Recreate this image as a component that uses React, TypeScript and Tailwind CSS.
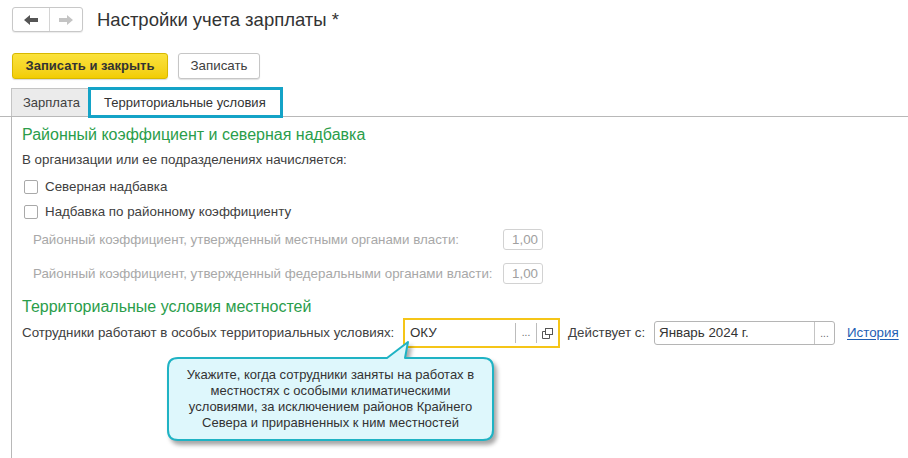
import React from 'react';

const ArrowLeft = ({ color }: { color: string }) => (
    <svg width="14" height="10" viewBox="0 0 14 10">
        <path d="M0 5 L6 0 L6 3 L14 3 L14 7 L6 7 L6 10 Z" fill={color} />
    </svg>
);

const ArrowRight = ({ color }: { color: string }) => (
    <svg width="14" height="10" viewBox="0 0 14 10">
        <path d="M14 5 L8 0 L8 3 L0 3 L0 7 L8 7 L8 10 Z" fill={color} />
    </svg>
);

const OpenIcon = () => (
    <svg width="11" height="11" viewBox="0 0 11 11" fill="none" stroke="#555" strokeWidth="1">
        <rect x="3.5" y="0.5" width="7" height="6" fill="white" />
        <path d="M3.5 3.5 H0.5 V10.5 H7.5 V6.5" />
    </svg>
);

function Checkbox({ label }: { label: string }) {
    return (
        <div className="flex items-center h-[21px] pl-[12px]">
            <div className="w-[14px] h-[14px] border border-[#a9a9a9] rounded-[2px] bg-white" />
            <span className="ml-[7px] text-[13.33px] text-[#404040]">{label}</span>
        </div>
    );
}

function DisabledRow({ label, value, mt }: { label: string; value: string; mt: string }) {
    return (
        <div className={`flex items-center h-[21px] pl-[21px] ${mt}`}>
            <div className="w-[470px] text-[13.33px] text-[#a8a8a8]">{label}</div>
            <div className="w-[40px] h-[21px] border border-[#d2d2d2] rounded-[3px] flex items-center justify-end pr-[4px] text-[13.33px] text-[#a0a0a0]">
                {value}
            </div>
        </div>
    );
}

export default function App() {
    return (
        <div
            className="relative w-[908px] h-[458px] bg-white overflow-hidden text-[#404040]"
            style={{ fontFamily: '"Liberation Sans", Arial, sans-serif' }}
        >
            {/* Header */}
            <div className="flex items-center pt-[7px] pl-[12px] h-[32px]">
                <div className="flex h-[25px] w-[71px] border border-[#c8c8c8] rounded-[3px] bg-white shadow-[0_1px_1px_rgba(0,0,0,0.08)]">
                    <div className="w-[37px] flex items-center justify-center border-r border-[#d4d4d4]">
                        <ArrowLeft color="#555" />
                    </div>
                    <div className="flex-1 flex items-center justify-center">
                        <ArrowRight color="#c4c4c4" />
                    </div>
                </div>
                <h1 className="ml-[14px] text-[18.5px] text-[#333] leading-[25px]">Настройки учета зарплаты *</h1>
            </div>

            {/* Command bar */}
            <div className="flex items-center gap-[10px] pl-[12px] mt-[21px]">
                <button className="h-[26px] w-[156px] rounded-[3px] border border-[#d8b800] bg-gradient-to-b from-[#fbe23a] to-[#f2cd00] text-[13px] font-bold text-[#333] shadow-[0_1px_1px_rgba(0,0,0,0.15)]">
                    Записать и закрыть
                </button>
                <button className="h-[26px] w-[82px] rounded-[3px] border border-[#c6c6c6] bg-white text-[13.33px] text-[#404040] shadow-[0_1px_1px_rgba(0,0,0,0.12)]">
                    Записать
                </button>
            </div>

            {/* Tabs */}
            <div className="flex items-end pl-[11px] mt-[9px] h-[29px] border-b border-[#b8b8b8]">
                <div className="h-[28px] w-[78px] bg-[#ebebeb] border border-b-0 border-[#c4c4c4] flex items-center pl-[11px] text-[13px] text-[#404040]">
                    Зарплата
                </div>
                <div className="relative h-[31px] w-[195px] -mb-[2px] -ml-[1px] bg-white border-[3px] border-[#14a3c7] flex items-center pl-[13px] text-[13px] text-[#333]">
                    Территориальные условия
                </div>
            </div>

            {/* Panel */}
            <div className="ml-[11px] border-l border-[#b8b8b8] h-[400px] flex flex-col">
                <div className="mt-[8px] pl-[10px] h-[20px] leading-[20px] text-[16px] text-[#2a9d4a]">
                    Районный коэффициент и северная надбавка
                </div>
                <div className="mt-[7px] pl-[10px] h-[16px] leading-[16px] text-[13.33px] text-[#404040]">
                    В организации или ее подразделениях начисляется:
                </div>
                <div className="mt-[8px]">
                    <Checkbox label="Северная надбавка" />
                </div>
                <div className="mt-[4px]">
                    <Checkbox label="Надбавка по районному коэффициенту" />
                </div>
                <DisabledRow
                    mt="mt-[7px]"
                    label="Районный коэффициент, утвержденный местными органами власти:"
                    value="1,00"
                />
                <DisabledRow
                    mt="mt-[13px]"
                    label="Районный коэффициент, утвержденный федеральными органами власти:"
                    value="1,00"
                />
                <div className="mt-[13px] pl-[10px] h-[20px] leading-[20px] text-[16px] text-[#2a9d4a]">
                    Территориальные условия местностей
                </div>
                <div className="mt-[1px] pl-[10px] flex items-center h-[30px]">
                    <div className="w-[381px] text-[13.33px] text-[#404040]">
                        Сотрудники работают в особых территориальных условиях:
                    </div>
                    <div className="w-[157px] h-[30px] border-[2px] border-[#f5c518] flex items-stretch bg-white">
                        <div className="flex-1 flex items-center pl-[5px] text-[13.33px] text-[#333]">ОКУ</div>
                        <div className="w-[21px] border-l border-[#bcbcbc] my-[3px] flex items-end justify-center pb-[3px] text-[10px] text-[#666]">
                            ...
                        </div>
                        <div className="w-[22px] border-l border-[#bcbcbc] my-[3px] flex items-center justify-center">
                            <OpenIcon />
                        </div>
                    </div>
                    <div className="ml-[8px] w-[86px] text-[13.33px] text-[#404040]">Действует с:</div>
                    <div className="w-[181px] h-[24px] border border-[#b5b5b5] rounded-[3px] flex items-stretch bg-white">
                        <div className="flex-1 flex items-center pl-[4px] text-[13.33px] text-[#333]">Январь 2024 г.</div>
                        <div className="w-[20px] border-l border-[#c4c4c4] flex items-end justify-center pb-[3px] text-[10px] text-[#666]">
                            ...
                        </div>
                    </div>
                    <a className="ml-[12px] text-[13.33px] text-[#1f5fb4] underline underline-offset-2">История</a>
                </div>
            </div>

            {/* Callout */}
            <div className="absolute left-[160px] top-[335px] w-[345px] h-[118px]">
                <svg
                    width="345"
                    height="118"
                    viewBox="0 0 345 118"
                    className="absolute inset-0"
                    style={{ filter: 'drop-shadow(3px 4px 2px rgba(0,0,0,0.35))' }}
                >
                    <path
                        d="M18 23 L227 23 L248 7 L245 23 L323 23 Q333 23 333 33 L333 95 Q333 105 323 105 L18 105 Q8 105 8 95 L8 33 Q8 23 18 23 Z"
                        fill="#def7fc"
                        stroke="#1fb3c4"
                        strokeWidth="2"
                        strokeLinejoin="round"
                    />
                </svg>
                <div className="absolute left-[8px] top-[32px] w-[325px] text-center text-[13px] leading-[16px] text-[#333]">
                    Укажите, когда сотрудники заняты на работах в
                    <br />
                    местностях с особыми климатическими
                    <br />
                    условиями, за исключением районов Крайнего
                    <br />
                    Севера и приравненных к ним местностей
                </div>
            </div>
        </div>
    );
}
